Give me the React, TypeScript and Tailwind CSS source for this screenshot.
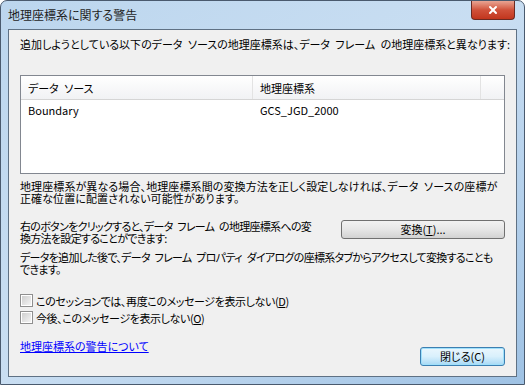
import { X } from 'lucide-react'

const font = { fontFamily: '"Noto Sans CJK JP", "Liberation Sans", sans-serif' }

function Checkbox({ label, keyChar }: { label: string; keyChar: string }) {
  return (
    <label className="flex h-[17px] items-center gap-[3px]">
      <span className="flex h-[13px] w-[13px] items-center justify-center border border-[#8f8f8f] bg-white">
        <span className="h-[9px] w-[9px] bg-gradient-to-br from-[#cfcfcf] to-[#f4f4f4]" />
      </span>
      <span className="tracking-[-0.4px]">
        {label}(<span className="underline">{keyChar}</span>)
      </span>
    </label>
  )
}

export default function App() {
  return (
    <div
      className="h-[385px] w-[525px] bg-white text-[11px] leading-[12px] whitespace-nowrap text-black [font-feature-settings:'palt'] [word-spacing:3px]"
      style={font}
    >
      <div className="flex h-[385px] w-[525px] flex-col rounded-t-[7px] border border-[#4a5a6e] bg-gradient-to-br from-[#bcd6ee] via-[#c9def2] to-[#9fc2e4] px-[7px] pb-[7px]">
        {/* title bar */}
        <div className="flex h-[28px] items-start justify-between">
          <span className="mt-[8px] text-[12px] text-[#1e1e1e]">地理座標系に関する警告</span>
          <button className="mr-[2px] flex h-[19px] w-[44px] items-center justify-center rounded-b-[4px] border border-t-0 border-[#6b2a22] bg-gradient-to-b from-[#e8a493] via-[#d0513a] to-[#c2351c]">
            <X className="h-[12px] w-[12px] text-white" strokeWidth={4} />
          </button>
        </div>

        {/* client */}
        <div className="flex flex-1 flex-col border border-[#5f7184] bg-[#f0f0f0] px-[11px]">
          <p className="mt-[8px] h-[12px]">
            追加しようとしている以下のデータ ソースの地理座標系は、データ フレーム の地理座標系と異なります:
          </p>

          <div className="mt-[25px] h-[99px] shrink-0 border border-[#828790] bg-white">
            <div className="flex h-[24px] border-b border-[#d5d5d5] bg-gradient-to-b from-white to-[#f1f2f4]">
              <div className="flex w-[232px] items-center border-r border-[#e3e3e3] pl-[7px]">データ ソース</div>
              <div className="flex w-[228px] items-center border-r border-[#e3e3e3] pl-[7px]">地理座標系</div>
              <div className="flex-1" />
            </div>
            <div className="flex h-[19px] items-center">
              <div className="w-[232px] pl-[7px]">Boundary</div>
              <div className="pl-[7px]">GCS_JGD_2000</div>
            </div>
          </div>

          <p className="mt-[6px] h-[24px] tracking-[0.1px]">
            地理座標系が異なる場合、地理座標系間の変換方法を正しく設定しなければ、データ ソースの座標が
            <br />
            正確な位置に配置されない可能性があります。
          </p>

          <div className="mt-[16px] flex h-[24px] items-start justify-between">
            <p className="tracking-[-0.7px]">
              右のボタンをクリックすると、データ フレーム の地理座標系への変
              <br />
              換方法を設定することができます:
            </p>
            <button className="h-[19px] w-[164px] rounded-[3px] border border-[#707070] bg-gradient-to-b from-[#f2f2f2] via-[#e6e6e6] to-[#d2d2d2] leading-[15px]">
              変換(<span className="underline">T</span>)...
            </button>
          </div>

          <p className="mt-[7px] h-[24px] tracking-[-0.7px]">
            データを追加した後で、データ フレーム プロパティ ダイアログの座標系タブからアクセスして変換することも
            <br />
            できます。
          </p>

          <div className="mt-[17px] flex flex-col">
            <Checkbox label="このセッションでは、再度このメッセージを表示しない" keyChar="D" />
            <Checkbox label="今後、このメッセージを表示しない" keyChar="O" />
          </div>

          <div className="mt-[14px] flex items-start justify-between">
            <a className="text-[#0000ff] underline" href="#">
              地理座標系の警告について
            </a>
            <button className="mt-[7px] h-[19px] w-[85px] rounded-[3px] border border-[#3c7fb1] bg-gradient-to-b from-[#eaf6fd] via-[#d9f0fc] to-[#a7d9f5] leading-[15px] shadow-[inset_0_0_0_1px_#9fe0fb]">
              閉じる(C)
            </button>
          </div>
        </div>
      </div>
    </div>
  )
}
